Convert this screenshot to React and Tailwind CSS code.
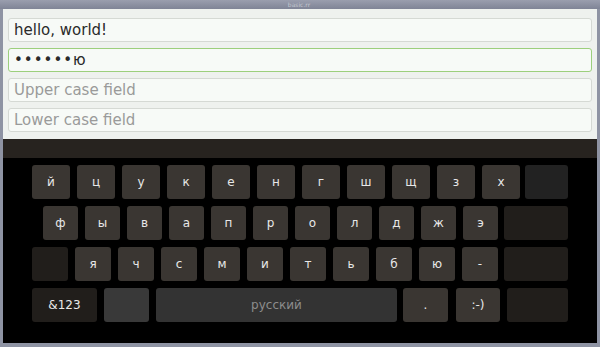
import React from "react";

const Key = ({ w, label, tone = "key", className = "" }) => {
  const tones = {
    key: "bg-[#3a3632] text-[#e8e8e8]",
    dark: "bg-[#211e1b] text-[#e8e8e8]",
    back: "bg-[#222222] text-[#e8e8e8]",
    grey: "bg-[#393939] text-[#e8e8e8]",
    space: "bg-[#333333] text-[#8c8c8c]",
  };
  return (
    <div
      className={`${w} h-[34px] shrink-0 rounded-[3px] flex items-center justify-center text-[12px] ${tones[tone]} ${className}`}
    >
      {label}
    </div>
  );
};

const row1 = ["й", "ц", "у", "к", "е", "н", "г", "ш", "щ", "з", "х"];
const row2 = ["ф", "ы", "в", "а", "п", "р", "о", "л", "д", "ж", "э"];
const row3 = ["я", "ч", "с", "м", "и", "т", "ь", "б", "ю", "-"];

const Field = ({ children, active, placeholder }) => (
  <div
    className={`h-[24px] rounded-[3px] border bg-[#f7faf7] flex items-center px-[5px] text-[15px] ${
      active ? "border-[#9ccf7c]" : "border-[#d5d9d4]"
    } ${placeholder ? "text-[#9a9a9a]" : "text-[#2a2a2a]"}`}
  >
    {children}
  </div>
);

export default function App() {
  return (
    <div
      className="w-[600px] h-[347px] bg-[#8e93a3] flex flex-col overflow-hidden"
      style={{ fontFamily: '"DejaVu Sans", "Noto Sans", sans-serif' }}
    >
      {/* title bar */}
      <div className="h-[9px] shrink-0 bg-gradient-to-b from-[#9a9eae] to-[#7f8496] flex items-center justify-center">
        <span className="text-[6px] leading-none text-[#c4c7d0] ml-[-2px]">basic.rr</span>
      </div>

      <div className="flex-1 mx-[3px] mb-[4px] flex flex-col">
        {/* text fields */}
        <div className="h-[130px] shrink-0 bg-[#eef1ee] px-[5px] pt-[9px] flex flex-col gap-[6px]">
          <Field>hello, world!</Field>
          <Field active>
            <span className="tracking-[1px]">••••••</span>ю
          </Field>
          <Field placeholder>Upper case field</Field>
          <Field placeholder>Lower case field</Field>
        </div>

        <div className="h-[19px] shrink-0 bg-[#27231f]" />

        {/* keyboard */}
        <div className="flex-1 bg-black pt-[7px] flex flex-col gap-[7px]">
          <div className="flex gap-[7px] pl-[29px]">
            {row1.map((k) => (
              <Key key={k} w="w-[38px]" label={k} />
            ))}
            <Key w="w-[43px]" tone="back" className="ml-[-2px]" />
          </div>
          <div className="flex gap-[7px] pl-[40px]">
            {row2.map((k) => (
              <Key key={k} w="w-[35px]" label={k} />
            ))}
            <Key w="w-[64px]" tone="dark" className="ml-[-1px]" />
          </div>
          <div className="flex gap-[7px] pl-[29px]">
            <Key w="w-[36px]" tone="dark" />
            {row3.map((k) => (
              <Key key={k} w="w-[36px]" label={k} />
            ))}
            <Key w="w-[64px]" tone="dark" className="ml-[-1px]" />
          </div>
          <div className="flex gap-[7px] pl-[29px]">
            <Key w="w-[65px]" tone="dark" label="&123" className="text-[11px]" />
            <Key w="w-[45px]" tone="grey" />
            <Key w="w-[241px]" tone="space" label="русский" />
            <Key w="w-[45px]" label="." className="ml-[-1px]" />
            <Key w="w-[44px]" label=":-)" className="ml-[1px]" />
            <Key w="w-[61px]" tone="dark" />
          </div>
        </div>
      </div>
    </div>
  );
}
